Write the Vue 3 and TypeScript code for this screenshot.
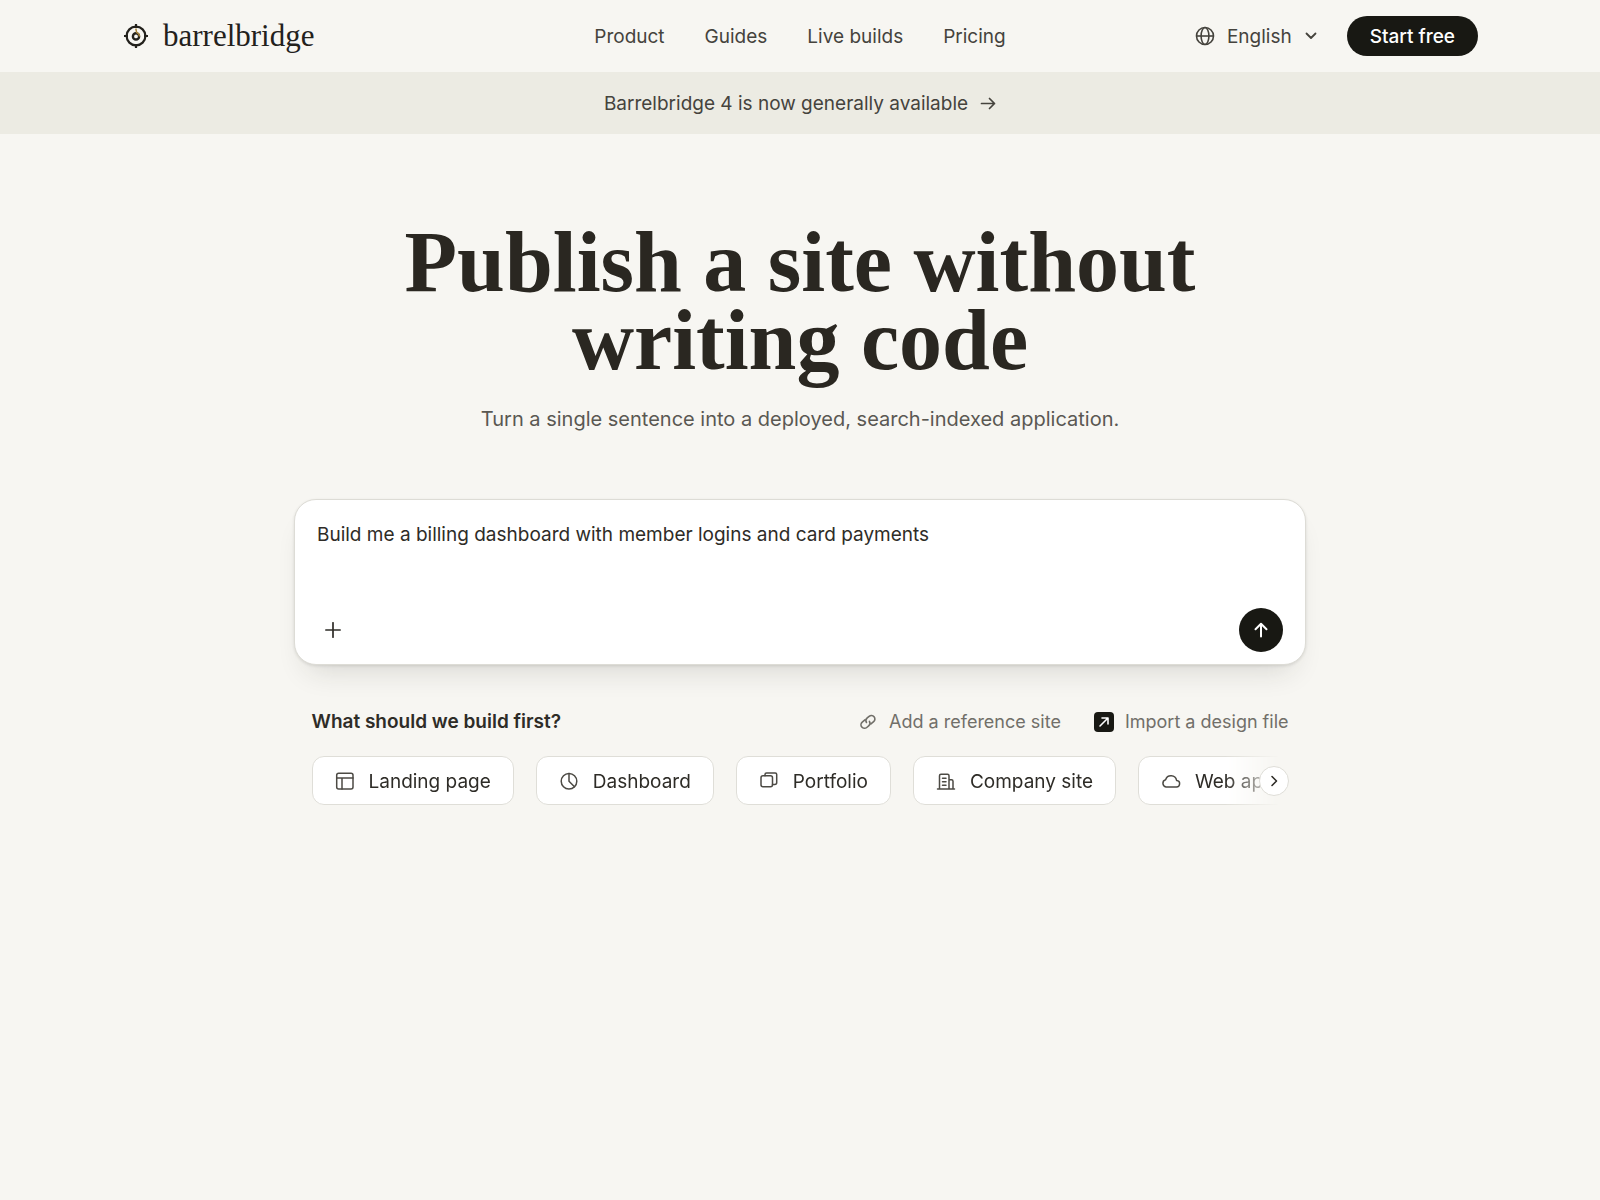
<script setup lang="ts">
import { ref } from 'vue'

interface Template {
  id: string
  label: string
}

const navItems: string[] = ['Product', 'Guides', 'Live builds', 'Pricing']
const templates: Template[] = [
  { id: 'landing', label: 'Landing page' },
  { id: 'dashboard', label: 'Dashboard' },
  { id: 'portfolio', label: 'Portfolio' },
  { id: 'company', label: 'Company site' },
  { id: 'webapp', label: 'Web app' },
]

const language = ref('English')
const prompt = ref('Build me a billing dashboard with member logins and card payments')
</script>

<template>
  <div class="page">
    <header class="header">
      <a class="brand" href="#">
        <svg class="brand-mark" viewBox="0 0 24 24" fill="none" stroke="currentColor" aria-hidden="true">
          <circle cx="12" cy="12" r="9.4" stroke-width="2.2" />
          <circle cx="12" cy="12.4" r="3.1" stroke-width="2.4" />
          <path d="M12 0v4M12 20v4M0 12h4M20 12h4" stroke-width="2.2" />
          <path d="M11.8 4.500l.8 3.800 2.200 1.700.8 2.500" stroke="#a8853c" stroke-width="1.5" />
        </svg>
        <span>barrelbridge</span>
      </a>
      <nav class="nav" aria-label="Main">
        <a v-for="item in navItems" :key="item" href="#">{{ item }}</a>
      </nav>
      <div class="actions">
        <label class="language">
          <svg class="globe" viewBox="0 0 20 20" fill="none" stroke="currentColor" stroke-width="1.6" aria-hidden="true">
            <circle cx="10" cy="10" r="8.5" />
            <ellipse cx="10" cy="10" rx="3.9" ry="8.5" />
            <path d="M1.5 10h17" />
          </svg>
          <select v-model="language" aria-label="Language">
            <option>English</option>
          </select>
          <svg class="caret" viewBox="0 0 12 12" fill="none" stroke="currentColor" stroke-width="1.8" stroke-linecap="round" stroke-linejoin="round" aria-hidden="true">
            <path d="M1.5 3.5L6 8l4.5-4.5" />
          </svg>
        </label>
        <button class="start" type="button">Start free</button>
      </div>
    </header>

    <a class="banner" href="#">
      <span>Barrelbridge 4 is now generally available</span>
      <svg viewBox="0 0 16 16" fill="none" stroke="currentColor" stroke-width="1.7" stroke-linecap="round" stroke-linejoin="round" aria-hidden="true">
        <path d="M1.5 7.5h13M9.5 2.5l5 5-5 5" />
      </svg>
    </a>

    <main class="hero">
      <h1>Publish a site without<br />writing code</h1>
      <p class="lead">Turn a single sentence into a deployed, search-indexed application.</p>

      <form class="composer" @submit.prevent>
        <textarea v-model="prompt" aria-label="Describe your site" spellcheck="false"></textarea>
        <div class="composer-bar">
          <button class="attach" type="button" aria-label="Attach">
            <svg viewBox="0 0 16 16" fill="none" stroke="currentColor" stroke-width="1.7" stroke-linecap="round">
              <path d="M8 .8v14.4M.8 8h14.4" />
            </svg>
          </button>
          <button class="send" type="submit" aria-label="Send">
            <svg viewBox="0 0 16 16" fill="none" stroke="currentColor" stroke-width="2" stroke-linecap="round" stroke-linejoin="round">
              <path d="M8 14.5V2M2.5 7.3L8 1.8l5.5 5.5" />
            </svg>
          </button>
        </div>
      </form>

      <section class="starters">
        <div class="starters-head">
          <h2>What should we build first?</h2>
          <div class="starter-links">
            <a href="#">
              <svg viewBox="0 0 20 20" fill="none" stroke="currentColor" stroke-width="1.6" stroke-linecap="round" aria-hidden="true">
                <g transform="rotate(-40 10 10)">
                  <path d="M9 6.400H5.500a3.500 3.500 0 0 0 0 7h2.500a3.500 3.500 0 0 0 3.500-3" />
                  <path d="M11 13.400h3.500a3.500 3.500 0 0 0 0-7H12a3.500 3.500 0 0 0-3.500 3" />
                </g>
              </svg>
              <span>Add a reference site</span>
            </a>
            <a href="#">
              <svg viewBox="0 0 20 20" fill="none" stroke-linecap="round" stroke-linejoin="round" aria-hidden="true">
                <rect width="20" height="20" rx="4" fill="#181813" />
                <path d="M6 14l8-8M8 6h6v6" stroke="#fff" stroke-width="1.6" />
              </svg>
              <span>Import a design file</span>
            </a>
          </div>
        </div>

        <div class="carousel">
          <div class="track">
            <button v-for="t in templates" :key="t.id" class="chip" type="button">
              <svg viewBox="0 0 20 20" fill="none" stroke="currentColor" stroke-width="1.5" stroke-linecap="round" stroke-linejoin="round" aria-hidden="true">
                <template v-if="t.id === 'landing'">
                  <rect x="1.7" y="1.2" width="16.3" height="15.8" rx="2" />
                  <path d="M1.7 6H18M7 6v11" />
                </template>
                <template v-else-if="t.id === 'dashboard'">
                  <circle cx="10" cy="9.2" r="7.8" />
                  <path d="M10 1.4v7.800l5.500 5.500" />
                </template>
                <template v-else-if="t.id === 'portfolio'">
                  <rect x="2" y="3.7" width="11.5" height="11" rx="2" />
                  <path d="M6 3.700V2.500A1.500 1.500 0 0 1 7.500 1h8.700a1.500 1.500 0 0 1 1.500 1.500v7.900a2 2 0 0 1-2 2h-2.200" />
                </template>
                <template v-else-if="t.id === 'company'">
                  <path d="M1.500 17h17M3.500 17V3.700A1.500 1.500 0 0 1 5 2.200h6.500A1.500 1.500 0 0 1 13 3.700V17M13 7.700h2.500A1.500 1.500 0 0 1 17 9.200V17" />
                  <path d="M6.500 6.200H10M6.500 9.700H10M6.500 13.200H10" />
                </template>
                <template v-else>
                  <path d="M5 15h10a3.300 3.300 0 0 0 .6-6.600 5.700 5.700 0 0 0-11-.6A3.700 3.700 0 0 0 5 15z" />
                </template>
              </svg>
              <span>{{ t.label }}</span>
            </button>
          </div>
          <button class="next" type="button" aria-label="More templates">
            <svg viewBox="0 0 12 12" fill="none" stroke="currentColor" stroke-width="1.6" stroke-linecap="round" stroke-linejoin="round">
              <path d="M4 1.5L8.5 6 4 10.5" />
            </svg>
          </button>
        </div>
      </section>
    </main>
  </div>
</template>

<style>
body {
  margin: 0;
  background: #f7f6f2;
}
</style>

<style scoped>
.page {
  min-height: 100vh;
  background: #f7f6f2;
  color: #2e2c27;
  font-family: Inter, "Liberation Sans", sans-serif;
  font-size: 19px;
  line-height: 28px;
}
a {
  color: inherit;
  text-decoration: none;
}
button,
select,
textarea {
  margin: 0;
  padding: 0;
  border: 0;
  background: none;
  color: inherit;
  font: inherit;
}
button {
  cursor: pointer;
}
svg {
  display: block;
  flex: none;
}
.header {
  display: grid;
  grid-template-columns: 1fr auto 1fr;
  align-items: center;
  box-sizing: border-box;
  height: 72px;
  padding: 0 122px;
  color: #45433d;
}
.brand {
  display: flex;
  align-items: center;
  gap: 15px;
  color: #23211c;
  font-family: "Liberation Serif", serif;
  font-size: 31px;
}
.brand-mark {
  width: 24px;
  height: 24px;
  margin-left: 2px;
}
.nav {
  display: flex;
  gap: 40px;
  padding-top: 2px;
}
.actions {
  display: flex;
  align-items: center;
  justify-content: flex-end;
  gap: 30px;
}
.language {
  display: flex;
  align-items: center;
  gap: 12px;
}
.language select {
  appearance: none;
  field-sizing: content;
  padding: 2px 1px 0 0;
}
.globe {
  width: 20px;
  height: 20px;
}
.caret {
  width: 12px;
  height: 12px;
}
.start {
  height: 40px;
  padding: 1px 23px 0;
  border-radius: 20px;
  background: #181813;
  color: #fff;
  font-weight: 500;
}
.banner {
  display: flex;
  align-items: center;
  justify-content: center;
  gap: 12px;
  box-sizing: border-box;
  height: 62px;
  padding-top: 1px;
  background: #ecebe3;
  color: #45433d;
}
.banner svg {
  width: 16px;
  height: 16px;
}
.hero {
  display: flex;
  flex-direction: column;
  align-items: center;
  padding: 89px 24px 0;
}
h1 {
  margin: 0;
  color: #2a2721;
  font: bold 86px/78px "Liberation Serif", serif;
  text-align: center;
}
.lead {
  margin: 26px 0 66px;
  color: #5a5852;
  font-size: 20px;
}
.composer {
  box-sizing: border-box;
  width: 100%;
  max-width: 1012px;
  padding: 21px 22px 12px;
  border: 1px solid #dddcd6;
  border-radius: 22px;
  background: #fff;
  box-shadow: 0 1px 3px rgba(40, 38, 30, 0.12), 0 18px 30px -14px rgba(40, 38, 30, 0.16);
}
.composer textarea {
  display: block;
  width: 100%;
  height: 87px;
  resize: none;
  outline: none;
}
.composer-bar {
  display: flex;
  align-items: center;
  justify-content: space-between;
}
.attach,
.send {
  display: grid;
  place-items: center;
  height: 44px;
  border-radius: 22px;
}
.attach {
  width: 32px;
}
.send {
  width: 44px;
  background: #181813;
  color: #fff;
}
.attach svg,
.send svg {
  width: 16px;
  height: 16px;
}
.starters {
  width: 100%;
  max-width: 977px;
  padding-top: 43px;
}
.starters-head,
.starter-links,
.starter-links a {
  display: flex;
  align-items: center;
}
.starters-head {
  justify-content: space-between;
}
h2 {
  margin: 0;
  font-size: 19px;
  font-weight: 600;
}
.starter-links {
  gap: 33px;
  color: #716f69;
  font-size: 18px;
}
.starter-links a {
  gap: 11px;
}
.starter-links svg {
  width: 20px;
  height: 20px;
}
.carousel {
  position: relative;
  margin-top: 20px;
}
.track {
  display: flex;
  gap: 22px;
  overflow: hidden;
  mask-image: linear-gradient(to right, #000 calc(100% - 64px), transparent calc(100% - 10px));
}
.chip {
  display: flex;
  flex: none;
  align-items: center;
  gap: 14px;
  box-sizing: border-box;
  height: 49px;
  padding: 2px 22px 0;
  border: 1px solid #dfded8;
  border-radius: 12px;
  background: #fff;
}
.chip svg {
  width: 20px;
  height: 20px;
  color: #4c4a44;
}
.next {
  position: absolute;
  top: 10px;
  right: 0;
  display: grid;
  place-items: center;
  box-sizing: border-box;
  width: 30px;
  height: 30px;
  border: 1px solid #dfded8;
  border-radius: 15px;
  background: #fff;
}
.next svg {
  width: 12px;
  height: 12px;
}
</style>
